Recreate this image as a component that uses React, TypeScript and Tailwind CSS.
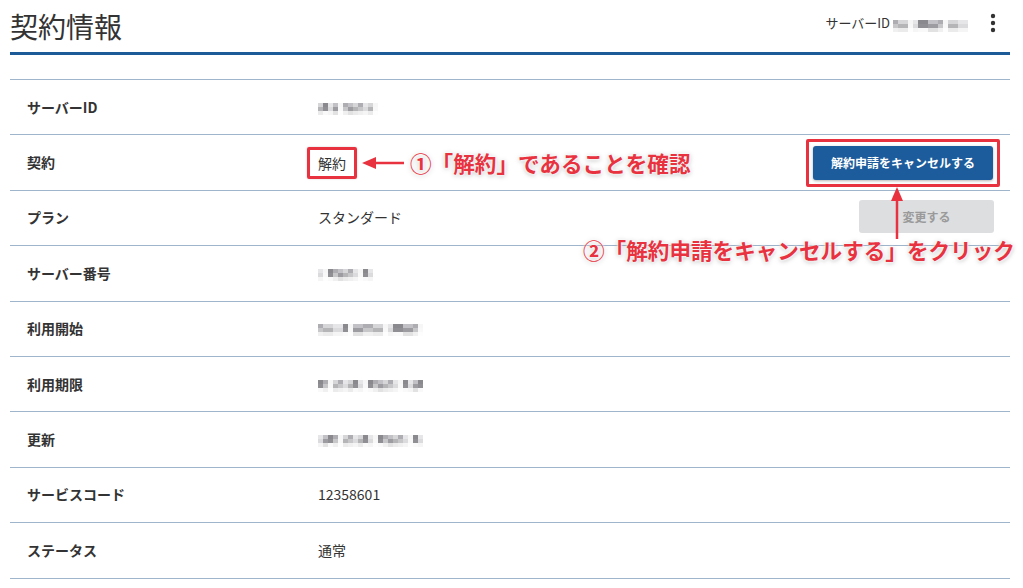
import React from "react";

const FONT = '"Noto Sans CJK JP", "Noto Sans", sans-serif';

const shades = ["#8a8a8e", "#b4b4b8", "#d6d6d8", "#6a6a70", "#c2c2c6", "#9c9ca0", "#e6e6e8", "#7c7c82", "#aeaeb2", "#cfcfd2"];

function Pix({ w, seed = 1 }: { w: number; seed?: number }) {
  const cols = Math.round(w / 5);
  const cells: React.ReactNode[] = [];
  for (let r = 0; r < 3; r++) {
    for (let c = 0; c < cols; c++) {
      const i = (c * 7 + r * 3 + seed * 5 + ((c * c + seed) % 4)) % shades.length;
      const gap = (c + seed) % 7 === 6;
      cells.push(
        <span
          key={r + "-" + c}
          className="block w-[5px] h-[4px]"
          style={{ background: gap ? "#f6f6f7" : shades[i], opacity: r === 2 ? 0.25 : r === 1 ? 0.75 : 1 }}
        />
      );
    }
  }
  return (
    <span className="inline-grid align-middle" style={{ gridTemplateColumns: `repeat(${cols}, 5px)` }}>
      {cells}
    </span>
  );
}

function Row({ label, children, right }: { label: string; children: React.ReactNode; right?: React.ReactNode }) {
  return (
    <div className="flex items-center h-[55.4px] border-b border-[#9fb5cc] text-[14px]">
      <div className="w-[308px] pl-[17px] font-bold text-[#333]">{label}</div>
      <div className="flex-1 text-[#333]">{children}</div>
      {right}
    </div>
  );
}

const shadow = "[text-shadow:0_0_3px_#fff,0_0_3px_#fff,0_1px_5px_rgba(0,0,0,0.35)]";

export default function App() {
  return (
    <div className="relative w-[1023px] h-[588px] bg-white overflow-hidden" style={{ fontFamily: FONT }}>
      <div className="pl-[10px] pr-[13px]">
        <div className="flex items-center h-[55px] border-b-[3px] border-[#1c5b98]">
          <h1 className="text-[28px] leading-none text-[#333] font-normal">契約情報</h1>
          <div className="ml-auto flex items-center text-[13px] text-[#333] mt-[-6px]">
            <span>サーバーID</span>
            <span className="ml-[3px] mt-[2px]"><Pix w={75} seed={3} /></span>
            <svg className="ml-[22px] mr-[14px]" width="6" height="20" viewBox="0 0 6 20">
              <circle cx="3" cy="3" r="2.2" fill="#333" />
              <circle cx="3" cy="10" r="2.2" fill="#333" />
              <circle cx="3" cy="17" r="2.2" fill="#333" />
            </svg>
          </div>
        </div>
        <div className="h-[25px] border-b border-[#9fb5cc]" />
        <Row label="サーバーID"><Pix w={60} seed={2} /></Row>
        <Row
          label="契約"
          right={
            <div className="mr-[10px] border-[3px] border-[#e8323f] rounded-[2px] p-[4px]">
              <button className="w-[180px] h-[34px] bg-[#1d5c9c] text-white text-[12px] font-bold rounded-[3px] shadow-[0_1px_3px_rgba(0,0,0,0.3)]">
                解約申請をキャンセルする
              </button>
            </div>
          }
        >
          <span className="inline-block ml-[-11px] border-[3px] border-[#e8323f] rounded-[2px] px-[8px] py-[3px] leading-[20px] shadow-[0_0_2px_rgba(0,0,0,0.2)]">解約</span>
        </Row>
        <Row
          label="プラン"
          right={
            <button className="mr-[16px] w-[135px] h-[33px] bg-[#dcdee0] text-[#9a9a9a] text-[12px] font-bold rounded-[3px] mt-[-2px]">
              変更する
            </button>
          }
        >
          スタンダード
        </Row>
        <Row label="サーバー番号"><Pix w={55} seed={5} /></Row>
        <Row label="利用開始"><Pix w={105} seed={7} /></Row>
        <Row label="利用期限"><Pix w={105} seed={4} /></Row>
        <Row label="更新"><Pix w={105} seed={9} /></Row>
        <Row label="サービスコード">12358601</Row>
        <Row label="ステータス">通常</Row>
      </div>

      {/* annotation 1 */}
      <div className="absolute left-[362px] top-[150px] flex items-center">
        <svg width="42" height="14" viewBox="0 0 42 14" className="mr-[6px]">
          <line x1="10" y1="7" x2="42" y2="7" stroke="#e8323f" strokeWidth="2.5" />
          <polygon points="0,7 14,1 14,13" fill="#e8323f" />
        </svg>
        <span className={"text-[21.6px] font-bold text-[#e8323f] leading-[26px] whitespace-nowrap " + shadow}>①「解約」であることを確認</span>
      </div>

      {/* annotation 2 */}
      <svg className="absolute left-[890px] top-[187px]" width="14" height="52" viewBox="0 0 14 52">
        <line x1="7" y1="10" x2="7" y2="52" stroke="#e8323f" strokeWidth="2.5" />
        <polygon points="7,0 1,14 13,14" fill="#e8323f" />
      </svg>
      <div className={"absolute left-[583px] top-[236px] text-[21.6px] font-bold text-[#e8323f] leading-[28px] whitespace-nowrap " + shadow}>
        ②「解約申請をキャンセルする」をクリック
      </div>
    </div>
  );
}
